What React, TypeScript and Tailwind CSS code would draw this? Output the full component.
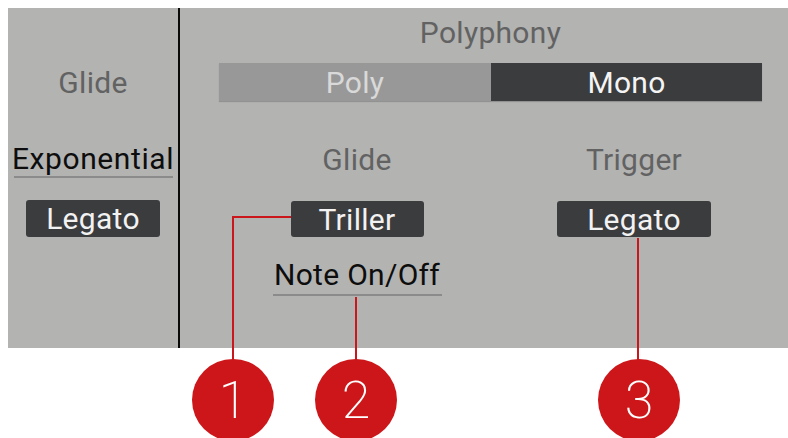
import React from "react";

const RED = "#cb161b";

function Callout({ cx, n }: { cx: number; n: string }) {
  return (
    <div
      className="absolute top-[359px] flex h-[82px] w-[82px] items-center justify-center rounded-full bg-[#cc1619] pt-[2px] text-[52px] leading-none font-extralight text-white"
      style={{ left: cx - 41 }}
    >
      {n}
    </div>
  );
}

const T = "text-[30px] leading-[29px] tracking-[0.3px]";

export default function App() {
  return (
    <div className="relative h-[438px] w-[788px] overflow-hidden bg-white font-['Roboto',sans-serif]">
      <div className="ml-[8px] mt-[8px] flex h-[340px] w-[780px] bg-[#b3b3b2]">
        {/* left column */}
        <div className="flex w-[170px] flex-col items-center">
          <div className={`mt-[60px] ${T} text-[#626262]`}>Glide</div>
          <div className="mt-[47px] flex w-[159px] flex-col items-center">
            <div className="text-[30px] leading-[29px] tracking-[0.6px] whitespace-nowrap text-[#0d0d0d]">Exponential</div>
            <div className="mt-[3px] h-[2px] w-[159px] bg-[#8b8b8b]" />
          </div>
          <div className={`mt-[22px] flex h-[37px] w-[134px] items-center justify-center rounded-[3px] bg-[#3b3c3e] ${T} text-[#f2f2f2]`}>
            Legato
          </div>
        </div>
        <div className="w-[2px] bg-[#0a0a0a]" />
        {/* right area */}
        <div className="flex w-[608px] flex-col">
          <div className={`ml-[39px] mt-[10px] w-[543px] text-center ${T} text-[#626262]`}>
            Polyphony
          </div>
          <div className="ml-[39px] mt-[16px] flex h-[38px] w-[543px] shadow-[0_1px_1px_rgba(0,0,0,0.18)]">
            <div className={`flex w-[272px] items-center justify-center bg-[#989898] ${T} text-[#d9d9d9]`}>
              Poly
            </div>
            <div className={`flex w-[271px] items-center justify-center bg-[#3b3c3e] ${T} text-[#f4f4f4]`}>
              Mono
            </div>
          </div>
          <div className="ml-[39px] mt-[44px] flex">
            <div className="flex w-[276px] flex-col items-center">
              <div className={`${T} text-[#626262]`}>Glide</div>
              <div className={`mt-[27px] flex h-[36px] w-[133px] items-center justify-center rounded-[3px] bg-[#3b3c3e] ${T} text-[#f2f2f2]`}>
                Triller
              </div>
              <div className="mt-[23px] flex w-[169px] flex-col items-center">
                <div className={`${T} whitespace-nowrap text-[#0d0d0d]`}>Note On/Off</div>
                <div className="mt-[5px] h-[2px] w-[169px] bg-[#8b8b8b]" />
              </div>
            </div>
            <div className="flex w-[278px] flex-col items-center">
              <div className={`${T} text-[#626262]`}>Trigger</div>
              <div className={`mt-[27px] flex h-[36px] w-[154px] items-center justify-center rounded-[3px] bg-[#3b3c3e] ${T} text-[#f2f2f2]`}>
                Legato
              </div>
            </div>
          </div>
        </div>
      </div>

      {/* callout lines */}
      <svg className="absolute left-0 top-0" width="788" height="438" fill="none">
        <path d="M233 360 V217 H291" stroke={RED} strokeWidth="2" />
        <path d="M356 297 V360" stroke={RED} strokeWidth="2" />
        <path d="M638 238 V360" stroke={RED} strokeWidth="2" />
      </svg>
      <Callout cx={233} n="1" />
      <Callout cx={356} n="2" />
      <Callout cx={639} n="3" />
    </div>
  );
}
